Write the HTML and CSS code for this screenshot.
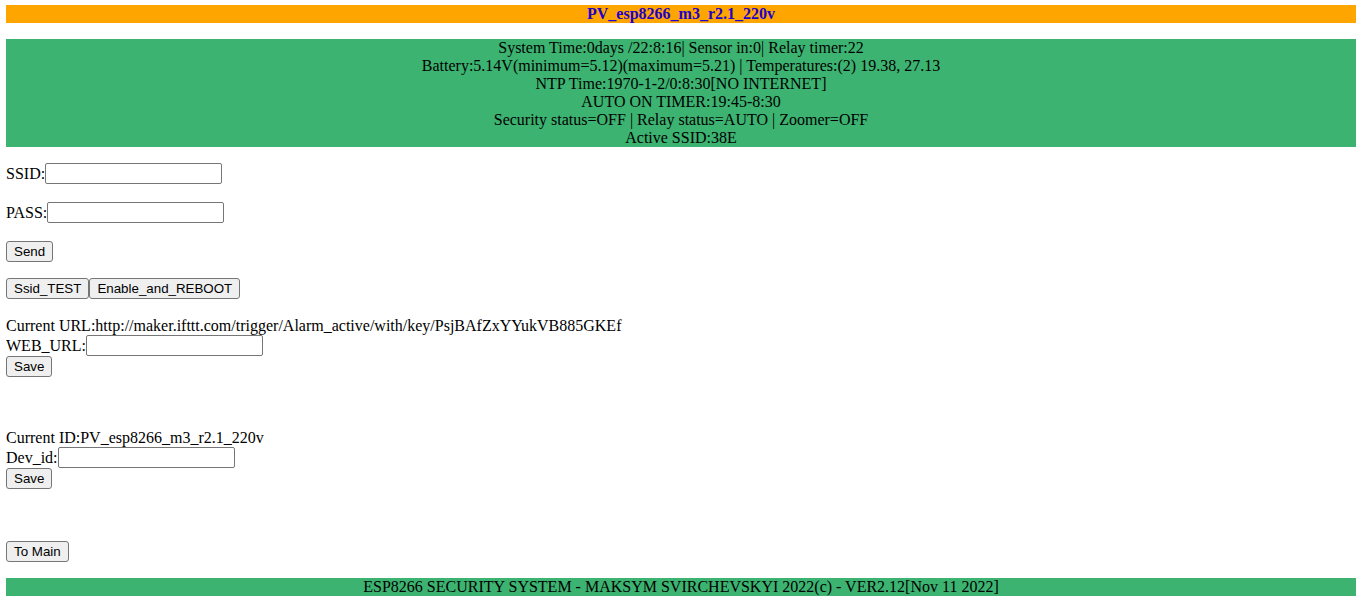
FILE: index.html
```html
<!DOCTYPE html>
<html>
<head>
<meta charset="utf-8">
<title>PV_esp8266_m3_r2.1_220v</title>
<link rel="stylesheet" href="styles.css">
</head>
<body>
<div class="title">PV_esp8266_m3_r2.1_220v</div>
<div class="status">
  <div>System Time:0days /22:8:16| Sensor in:0| Relay timer:22</div>
  <div>Battery:5.14V(minimum=5.12)(maximum=5.21) | Temperatures:(2) 19.38, 27.13</div>
  <div>NTP Time:1970-1-2/0:8:30[NO INTERNET]</div>
  <div>AUTO ON TIMER:19:45-8:30</div>
  <div>Security status=OFF | Relay status=AUTO | Zoomer=OFF</div>
  <div>Active SSID:38E</div>
</div>
<div class="row r-ssid">SSID:<input class="field" type="text"></div>
<div class="row r-gap">PASS:<input class="field" type="password"></div>
<div class="row r-gap"><button class="btn">Send</button></div>
<div class="row r-gap2"><button class="btn">Ssid_TEST</button><button class="btn">Enable_and_REBOOT</button></div>
<div class="line r-url">Current URL:http://maker.ifttt.com/trigger/Alarm_active/with/key/PsjBAfZxYYukVB885GKEf</div>
<div class="row">WEB_URL:<input class="field" type="text"></div>
<div class="row"><button class="btn">Save</button></div>
<div class="line r-big">Current ID:PV_esp8266_m3_r2.1_220v</div>
<div class="row">Dev_id:<input class="field" type="text"></div>
<div class="row"><button class="btn">Save</button></div>
<div class="row r-big"><button class="btn">To Main</button></div>
<div class="footer">ESP8266 SECURITY SYSTEM - MAKSYM SVIRCHEVSKYI 2022(c) - VER2.12[Nov 11 2022]</div>
</body>
</html>
```
FILE: styles.css
```css
html, body {
  background: #ffffff;
}
body {
  margin: 5px 6px;
  font-family: "Liberation Serif", "Times New Roman", serif;
  font-size: 16px;
  color: #000000;
}
.title {
  height: 18px;
  line-height: 18px;
  background: #ffa500;
  text-align: center;
  font-weight: bold;
  color: #2200cc;
}
.status {
  margin-top: 16px;
  background: #3cb371;
  text-align: center;
  line-height: 18px;
}
.row {
  display: flex;
  align-items: center;
  height: 21px;
  white-space: nowrap;
}
.line {
  height: 18px;
  line-height: 18px;
  white-space: nowrap;
}
.r-ssid { margin-top: 16px; }
.r-gap { margin-top: 18px; }
.r-gap2 { margin-top: 16px; }
.r-url { margin-top: 18px; }
.r-big { margin-top: 52px; }
.field {
  box-sizing: border-box;
  width: 177px;
  height: 21px;
  margin: 0;
  padding: 1px 2px;
  border: 1px solid #767676;
  border-radius: 2px;
  background: #ffffff;
  font-family: "Liberation Sans", Arial, sans-serif;
  font-size: 13.33px;
}
.btn {
  box-sizing: border-box;
  height: 21px;
  margin: 0;
  padding: 1px 7px;
  border: 1px solid #767676;
  border-radius: 3px;
  background: #efefef;
  color: #000000;
  font-family: "Liberation Sans", Arial, sans-serif;
  font-size: 13.33px;
  line-height: 15px;
}
.footer {
  margin-top: 16px;
  height: 18px;
  line-height: 18px;
  background: #3cb371;
  text-align: center;
}
```
